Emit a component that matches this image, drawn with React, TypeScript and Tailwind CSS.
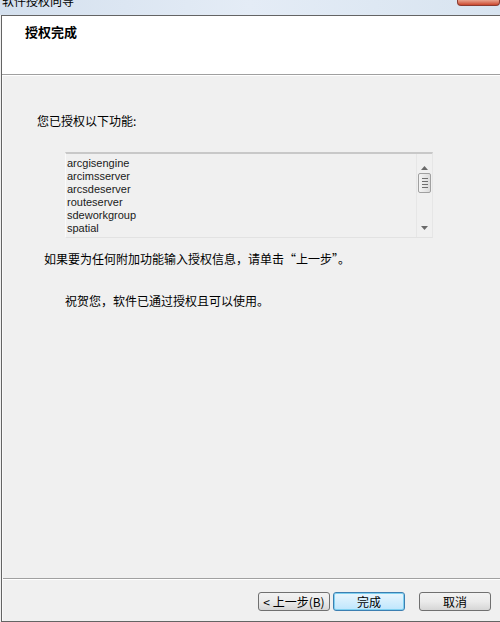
const cjk = { fontFamily: '"SimSun", "Noto Sans CJK SC", sans-serif' };

const features = [
  "arcgisengine",
  "arcimsserver",
  "arcsdeserver",
  "routeserver",
  "sdeworkgroup",
  "spatial",
];

function Scrollbar() {
  return (
    <div className="w-[16px] flex flex-col items-center border-l border-[#e6e6e6] bg-[#f0f0f0]">
      <div className="h-[18px] flex items-end justify-center pb-[2px]">
        <svg width="7" height="4" viewBox="0 0 7 4">
          <path d="M0 4 L3.5 0 L7 4 Z" fill="#6a6a6a" />
        </svg>
      </div>
      <div className="mt-[1px] w-[13px] h-[20px] rounded-[2px] border border-[#a0a0a0] bg-gradient-to-r from-[#f4f4f4] to-[#dcdcdc] flex flex-col items-center justify-center gap-[2px]">
        <div className="w-[6px] h-px bg-[#6f6f6f]" />
        <div className="w-[6px] h-px bg-[#6f6f6f]" />
        <div className="w-[6px] h-px bg-[#6f6f6f]" />
        <div className="w-[6px] h-px bg-[#6f6f6f]" />
      </div>
      <div className="flex-1" />
      <div className="h-[14px] flex items-start justify-center pt-[3px]">
        <svg width="7" height="4" viewBox="0 0 7 4">
          <path d="M0 0 L3.5 4 L7 0 Z" fill="#6a6a6a" />
        </svg>
      </div>
    </div>
  );
}

function Btn({ children, primary }: { children: React.ReactNode; primary?: boolean }) {
  return (
    <div
      className={
        "h-[19px] w-[72px] rounded-[3px] flex items-center justify-center text-[12px] text-black " +
        (primary
          ? "border border-[#3c7fb1] shadow-[inset_0_0_0_1px_#7fd0f0] bg-gradient-to-b from-[#eaf6fd] to-[#bee6fd]"
          : "border border-[#707070] bg-gradient-to-b from-[#f2f2f2] via-[#ebebeb] to-[#d6d6d6]")
      }
      style={cjk}
    >
      {children}
    </div>
  );
}

export default function App() {
  return (
    <div className="w-[500px] h-[622px] overflow-hidden bg-[#f0f0f0] flex flex-col" style={cjk}>
      {/* title bar */}
      <div className="h-[15px] shrink-0 flex justify-between bg-gradient-to-r from-[#d4e0ee] via-[#e4ecf6] to-[#d8e4f0] overflow-hidden">
        <div className="pl-[2px] mt-[-7px] text-[12px] leading-[16px] text-black">软件授权向导</div>
        <div className="w-[43px] h-[6px] rounded-b-[4px] border border-t-0 border-[#8a3b30] bg-gradient-to-b from-[#e8a38f] to-[#c9462d]" />
      </div>

      {/* window body */}
      <div className="flex-1 flex flex-col border-t border-l border-b border-[#646464] ml-px">
        {/* header */}
        <div className="h-[59px] shrink-0 bg-white border-b border-[#a0a0a0] pl-[23px] pt-[8px]">
          <div className="text-[13px] font-bold leading-[16px] text-black">授权完成</div>
        </div>
        <div className="h-px bg-white" />

        {/* content */}
        <div className="flex-1 flex flex-col border-l border-[#fafafa]">
          <div className="pl-[34px] pt-[38px] text-[12px] leading-[14px] text-black">您已授权以下功能:</div>

          <div className="ml-[62px] mt-[24px] w-[368px] h-[86px] flex border-t-2 border-t-[#c8c8c8] border-b border-b-[#e2e2e2] border-r border-r-[#e6e6e6] border-l border-l-[#fafafa]">
            <div className="flex-1 pl-[1px] pt-[3px]" style={{ fontFamily: '"Liberation Sans", Arial, sans-serif' }}>
              {features.map((f) => (
                <div key={f} className="text-[11px] leading-[13px] text-[#1a1a1a]">
                  {f}
                </div>
              ))}
            </div>
            <Scrollbar />
          </div>

          <div className="pl-[41px] mt-[14px] text-[12px] leading-[14px] text-black">
            如果要为任何附加功能输入授权信息，请单击“上一步”。
          </div>
          <div className="pl-[62px] mt-[28px] text-[12px] leading-[14px] text-black">
            祝贺您，软件已通过授权且可以使用。
          </div>

          <div className="flex-1" />

          {/* footer */}
          <div className="h-[43px] shrink-0 border-t border-[#a0a0a0] shadow-[inset_0_1px_0_#ffffff] flex items-start pt-[13px] pl-[255px] gap-[3px]">
            <Btn>&lt; 上一步(B)</Btn>
            <Btn primary>完成</Btn>
            <div className="w-[8px]" />
            <Btn>取消</Btn>
          </div>
        </div>
      </div>
    </div>
  );
}
